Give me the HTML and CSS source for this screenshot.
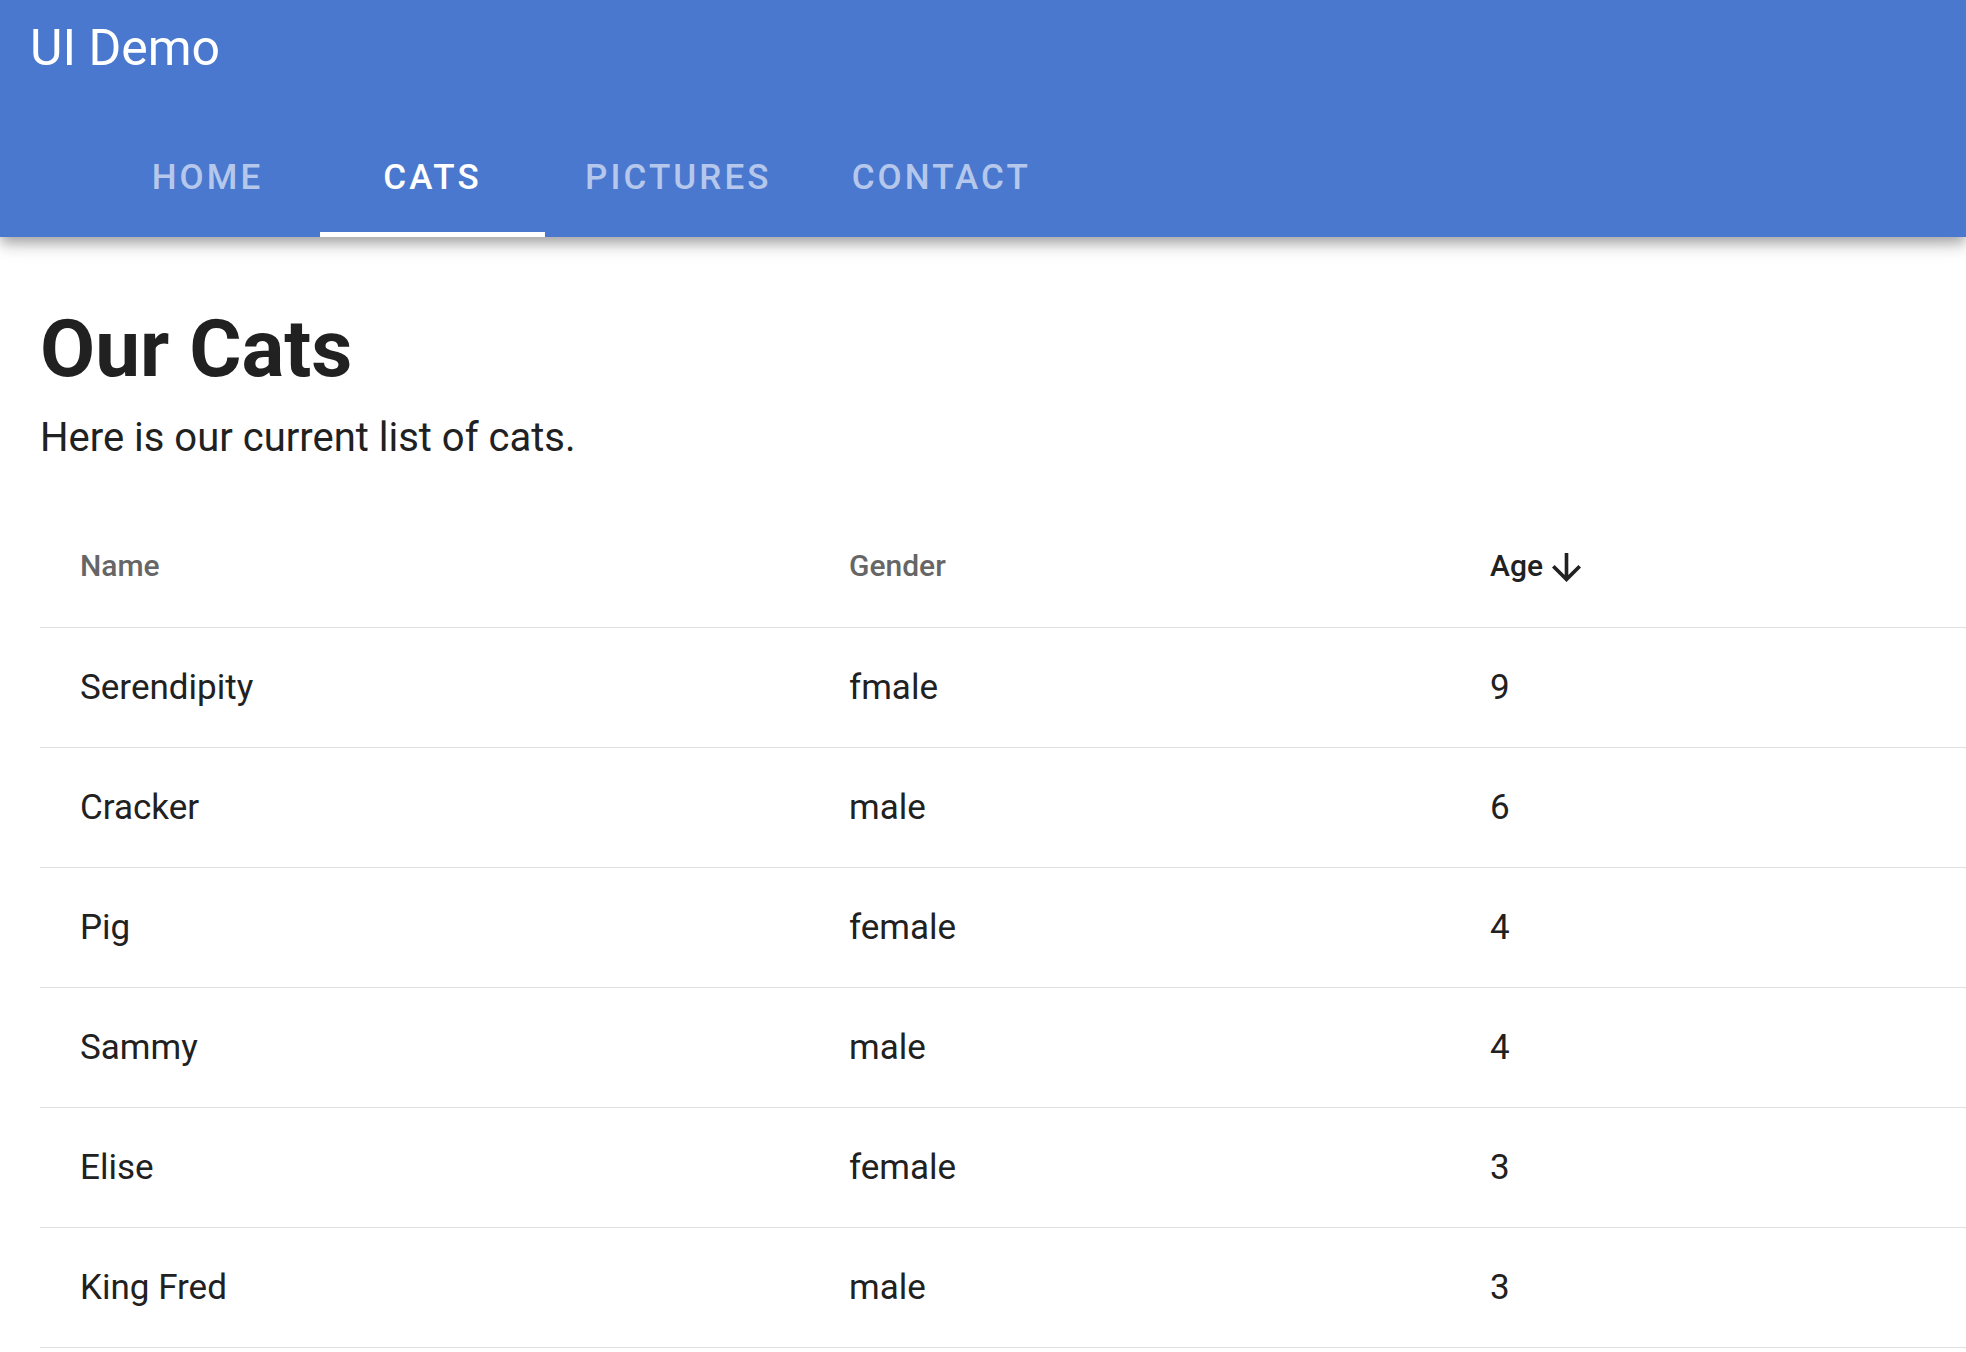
FILE: index.html
```
<!DOCTYPE html>
<html lang="en">
<head>
<meta charset="utf-8">
<title>UI Demo</title>
<link rel="stylesheet" href="styles.css">
</head>
<body>
<header class="appbar">
  <div class="toolbar"><span class="title">UI Demo</span></div>
  <nav class="tabs">
    <a class="tab">Home</a>
    <a class="tab active">Cats</a>
    <a class="tab">Pictures</a>
    <a class="tab">Contact</a>
  </nav>
</header>
<main class="content">
  <h1 class="heading">Our Cats</h1>
  <p class="lead">Here is our current list of cats.</p>
  <table class="cats">
    <colgroup><col class="c-name"><col class="c-gender"><col class="c-age"></colgroup>
    <thead>
      <tr>
        <th>Name</th>
        <th>Gender</th>
        <th class="sorted"><span class="sortlabel">Age<svg class="arrow" viewBox="4 4 16 16" width="29" height="29"><path d="M20 12l-1.41-1.41L13 16.17V4h-2v12.17l-5.58-5.59L4 12l8 8 8-8z" fill="currentColor"/></svg></span></th>
      </tr>
    </thead>
    <tbody>
      <tr><td>Serendipity</td><td>fmale</td><td>9</td></tr>
      <tr><td>Cracker</td><td>male</td><td>6</td></tr>
      <tr><td>Pig</td><td>female</td><td>4</td></tr>
      <tr><td>Sammy</td><td>male</td><td>4</td></tr>
      <tr><td>Elise</td><td>female</td><td>3</td></tr>
      <tr><td>King Fred</td><td>male</td><td>3</td></tr>
    </tbody>
  </table>
</main>
</body>
</html>
```
FILE: styles.css
```
* { box-sizing: border-box; }
html, body { margin: 0; padding: 0; background: #fff; }
body {
  font-family: Roboto, "Liberation Sans", sans-serif;
  color: #212121;
  overflow: hidden;
}
.appbar {
  position: relative;
  z-index: 2;
  background: #4a78cf;
  color: #fff;
  box-shadow: 0 5px 10px -2px rgba(0,0,0,0.2), 0 10px 12px 0 rgba(0,0,0,0.14), 0 2px 25px 0 rgba(0,0,0,0.12);
}
.toolbar {
  height: 117px;
  padding: 23px 0 0 30px;
}
.title {
  font-size: 50px;
  line-height: 50px;
  font-weight: 400;
  display: block;
}
.tabs {
  display: flex;
  height: 120px;
  padding-left: 95px;
}
.tab {
  position: relative;
  display: flex;
  align-items: center;
  justify-content: center;
  min-width: 225px;
  padding: 0 40px;
  font-size: 35px;
  font-weight: 500;
  letter-spacing: 3.1px;
  text-transform: uppercase;
  color: rgba(255,255,255,0.6);
  cursor: pointer;
}
.tab.active { color: #fff; }
.tab.active::after {
  content: "";
  position: absolute;
  left: 0;
  right: 0;
  bottom: 0;
  height: 5px;
  background: #fff;
}
.content {
  padding: 0 40px;
}
.heading {
  margin: 64px 0 0;
  font-size: 80px;
  line-height: 96px;
  font-weight: 700;
  color: #212121;
}
.lead {
  margin: 11px 0 0;
  font-size: 40px;
  line-height: 60px;
  color: #212121;
}
.cats {
  margin-top: 38px;
  width: calc(100% + 40px);
  border-collapse: collapse;
  table-layout: fixed;
}
.c-name { width: 769px; }
.c-gender { width: 641px; }
.cats th, .cats td {
  text-align: left;
  padding: 0 40px;
  border-bottom: 1px solid #e0e0e0;
  vertical-align: middle;
}
.cats th {
  height: 121px;
  padding-bottom: 1px;
  font-size: 30px;
  font-weight: 500;
  color: #666;
}
.cats th.sorted { color: #212121; }
.sortlabel {
  display: inline-flex;
  align-items: center;
}
.arrow {
  margin-left: 9px;
  margin-top: 4px;
}
.cats td {
  height: 120px;
  font-size: 35px;
  font-weight: 400;
  color: #212121;
}
```
